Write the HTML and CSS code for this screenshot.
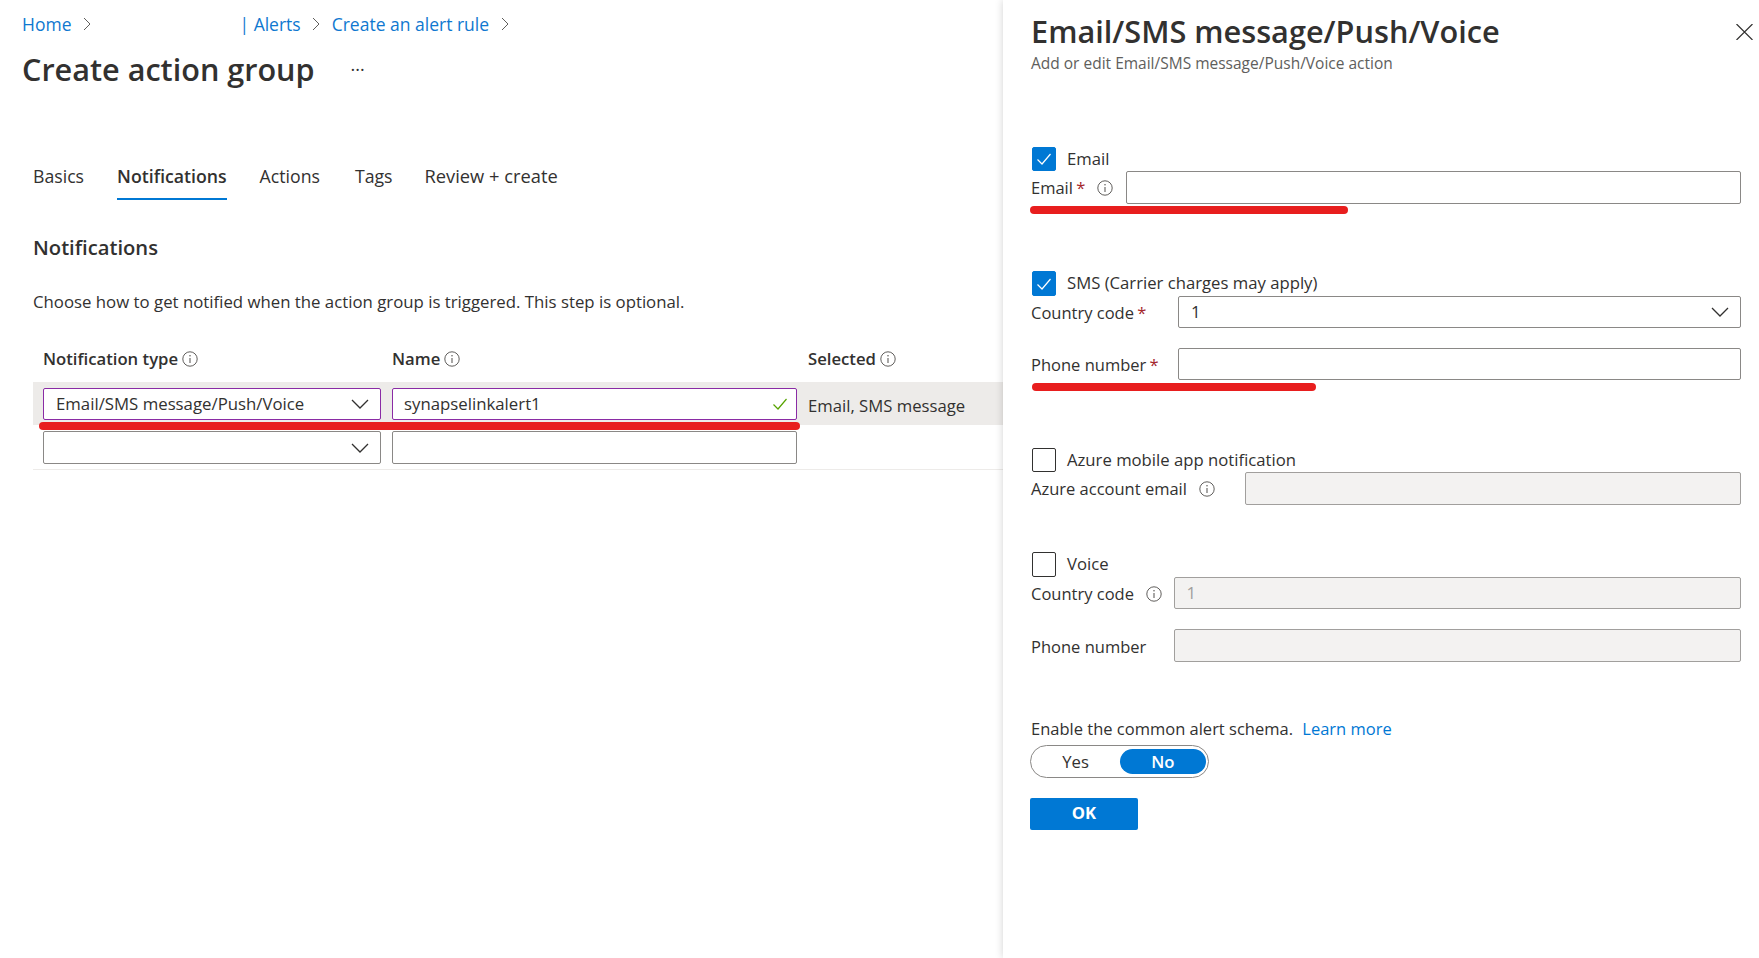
FILE: index.html
```html
<!DOCTYPE html>
<html lang="en">
<head>
<meta charset="utf-8">
<title>Create action group</title>
<link rel="stylesheet" href="styles.css">
</head>
<body>
<svg class="defs" width="0" height="0" aria-hidden="true">
  <symbol id="info" viewBox="0 0 16 16"><circle cx="8" cy="8" r="7.2" fill="none" stroke="currentColor" stroke-width="1"/><circle cx="8" cy="4.8" r=".8" fill="currentColor"/><path d="M8 7v5" stroke="currentColor" stroke-width="1.1" fill="none"/></symbol>
  <symbol id="chev" viewBox="0 0 18 10"><path d="M1 1l8 8 8-8" fill="none" stroke="currentColor" stroke-width="1.3"/></symbol>
  <symbol id="crumb" viewBox="0 0 8 14"><path d="M1 1l6 6-6 6" fill="none" stroke="currentColor" stroke-width="1"/></symbol>
  <symbol id="tick" viewBox="0 0 16 16"><path d="M1.500 8.500l4.500 4.500L14.500 3" fill="none" stroke="currentColor" stroke-width="1.200"/></symbol>
</svg>
<div class="page">
  <main class="main">
    <nav class="crumbs">
      <a class="crumb home">Home</a><svg class="crumb-chev"><use href="#crumb"/></svg>
      <a class="crumb alerts">| Alerts</a><svg class="crumb-chev"><use href="#crumb"/></svg>
      <a class="crumb">Create an alert rule</a><svg class="crumb-chev"><use href="#crumb"/></svg>
    </nav>
    <div class="title-row">
      <h1 class="title">Create action group</h1>
      <span class="dots">···</span>
    </div>
    <div class="tabs">
      <span class="tab">Basics</span>
      <span class="tab active">Notifications</span>
      <span class="tab">Actions</span>
      <span class="tab tab-tags">Tags</span>
      <span class="tab tab-review">Review + create</span>
    </div>
    <section class="content">
      <h2 class="section-title">Notifications</h2>
      <p class="intro">Choose how to get notified when the action group is triggered. This step is optional.</p>
      <div class="table">
        <div class="thead">
          <div class="col-type th">Notification type <svg class="info"><use href="#info"/></svg></div>
          <div class="col-name th">Name <svg class="info"><use href="#info"/></svg></div>
          <div class="col-sel th">Selected <svg class="info"><use href="#info"/></svg></div>
        </div>
        <div class="row row-active">
          <div class="col-type field field-active"><span>Email/SMS message/Push/Voice</span><svg class="chev"><use href="#chev"/></svg></div>
          <div class="col-name field field-active"><span>synapselinkalert1</span><svg class="tick"><use href="#tick"/></svg></div>
          <div class="col-sel cell">Email, SMS message</div>
          <i class="mark mark-row"></i>
        </div>
        <div class="row row-empty">
          <div class="col-type field"><span></span><svg class="chev"><use href="#chev"/></svg></div>
          <div class="col-name field"></div>
        </div>
      </div>
    </section>
  </main>
  <aside class="panel">
    <header class="panel-head">
      <div>
        <h2 class="panel-title">Email/SMS message/Push/Voice</h2>
        <p class="panel-sub">Add or edit Email/SMS message/Push/Voice action</p>
      </div>
      <svg class="close" viewBox="0 0 17 16"><path d="M.5 0l16 16M16.500 0L.5 16" fill="none" stroke="#323130" stroke-width="1.200"/></svg>
    </header>

    <section class="group group-email">
      <div class="check-row"><span class="box on"><svg class="box-tick"><use href="#tick"/></svg></span>Email</div>
      <div class="form-row r33">
        <label class="lbl w-email">Email <b class="req">*</b><svg class="info form-info"><use href="#info"/></svg></label>
        <div class="field"></div>
      </div>
      <i class="mark mark-email"></i>
    </section>

    <section class="group group-sms">
      <div class="check-row h25"><span class="box on"><svg class="box-tick"><use href="#tick"/></svg></span>SMS (Carrier charges may apply)</div>
      <div class="form-row r32">
        <label class="lbl w-sms">Country code <b class="req">*</b></label>
        <div class="field"><span>1</span><svg class="chev"><use href="#chev"/></svg></div>
      </div>
      <div class="form-row r32 gap20">
        <label class="lbl w-sms">Phone number <b class="req">*</b></label>
        <div class="field"></div>
      </div>
      <i class="mark mark-phone"></i>
    </section>

    <section class="group group-azure">
      <div class="check-row"><span class="box"></span>Azure mobile app notification</div>
      <div class="form-row r33">
        <label class="lbl w-azure">Azure account email<svg class="info form-info"><use href="#info"/></svg></label>
        <div class="field disabled"></div>
      </div>
    </section>

    <section class="group group-voice">
      <div class="check-row h25"><span class="box"></span>Voice</div>
      <div class="form-row r32">
        <label class="lbl w-voice">Country code<svg class="info form-info"><use href="#info"/></svg></label>
        <div class="field disabled"><span>1</span></div>
      </div>
      <div class="form-row r33 gap20">
        <label class="lbl w-voice">Phone number</label>
        <div class="field disabled"></div>
      </div>
    </section>

    <section class="schema">
      <div class="schema-text">Enable the common alert schema. <a class="learn">Learn more</a></div>
      <div class="toggle"><span class="opt">Yes</span><span class="opt opt-on">No</span></div>
      <button class="ok" type="button">OK</button>
    </section>
  </aside>
</div>
</body>
</html>
```

FILE: styles.css
```css
* { box-sizing: border-box; }
html, body { margin: 0; padding: 0; height: 100%; overflow: hidden; background: #fff; }
body { font-family: "Open Sans", "Noto Sans", sans-serif; font-size: 16.700px; line-height: 24px; color: #323130; }
.defs { position: absolute; }
.page { display: flex; height: 958px; width: 1759px; }
.main { width: 1003px; flex: none; padding-top: 12px; }

.crumbs { display: flex; align-items: center; height: 24px; padding-left: 22px; color: #0f78d0; font-size: 17.500px; }
.crumb-chev { width: 8px; height: 14px; margin: 0 11.500px; color: #605e5c; }
.crumb.alerts { margin-left: 137px; }
.title-row { display: flex; align-items: center; height: 40px; margin-top: 13px; padding-left: 22px; }
.title { margin: 0; font-size: 30.600px; font-weight: 600; line-height: 40px; }
.dots { margin-left: 36px; font-size: 18px; color: #323130; }

.tabs { display: flex; gap: 33px; height: 40px; margin: 71px 0 0 33px; font-size: 17.700px; }
.tab { height: 40px; padding-top: 4px; }
.tab.active { font-weight: 600; border-bottom: 2px solid #0078d4; }
.tab-tags { margin-left: 2px; }
.tab-review { margin-left: -1px; font-size: 18.300px; }

.content { padding-left: 33px; }
.section-title { margin: 35px 0 0; font-size: 20.200px; font-weight: 600; line-height: 24px; }
.intro { margin: 31px 0 0; line-height: 24px; font-size: 16.800px; }

.table { margin-top: 33px; }
.thead { display: flex; align-items: center; height: 24px; }
.th { font-weight: 600; display: flex; align-items: center; gap: 4px; }
.col-type { flex: 0 0 338px; margin-left: 10px; }
.col-name { flex: 0 0 404.500px; margin-left: 11px; }
.col-sel { margin-left: 11.500px; }

.row { position: relative; display: flex; align-items: center; }
.row-active { height: 43px; margin-top: 11px; background: #edebe9; }
.row-empty { height: 45px; padding: 6px 0 5px; border-bottom: 1px solid #edebe9; }
.row-active .field { height: 32px; }
.row-empty .field { height: 33px; }
.row-active .cell { padding-top: 4px; }

.field { flex: 1; display: flex; align-items: center; justify-content: space-between; height: 100%; border: 1px solid #8a8886; border-radius: 2px; padding: 0 11px 0 12px; background: #fff; min-width: 0; font-size: 16.800px; }
.col-type.field { flex: 0 0 338px; }
.col-name.field { flex: 0 0 404.500px; padding-left: 11px; }
.field-active { border-color: #8a2ba5; }
.disabled { background: #f3f2f1; border-color: #a19f9d; color: #a19f9d; }
.chev { width: 18px; height: 10px; flex: none; color: #323130; }
.tick { width: 16px; height: 16px; flex: none; color: #57a300; margin-right: -3px; }
.info { width: 16px; height: 16px; flex: none; color: #605e5c; }

.mark { position: absolute; display: block; height: 8px; background: #e81e1e; border-radius: 4px; }
.mark-row { left: 6px; top: 40px; width: 761px; }
.mark-email { left: -1px; top: 59px; width: 318px; }
.mark-phone { left: 1px; top: 112px; width: 284px; }

.panel { position: relative; width: 756px; flex: none; padding: 11px 18px 0 28px; box-shadow: 0 0 8px rgba(0, 0, 0, .18); background: #fff; }
.panel-head { display: flex; justify-content: space-between; margin-right: -12px; }
.panel-title { margin: 0 0 1px; font-size: 30.700px; font-weight: 600; line-height: 40px; }
.panel-sub { margin: 0; font-size: 15.500px; line-height: 22px; color: #605e5c; }
.close { width: 17px; height: 16px; margin-top: 13px; flex: none; }

.group { position: relative; }
.group-email { margin-top: 73px; }
.group-sms { margin-top: 67px; }
.group-azure { margin-top: 68px; }
.group-voice { margin-top: 47px; }

.check-row { display: flex; align-items: flex-start; gap: 11px; height: 24px; padding-left: 1px; }
.h25 { height: 25px; }
.box { display: flex; align-items: center; justify-content: center; width: 24px; height: 100%; border: 1px solid #323130; border-radius: 2px; }
.box.on { background: #0078d4; border-color: #0078d4; }
.box-tick { width: 16px; height: 16px; color: #fff; }

.form-row { display: flex; align-items: center; }
.r32 { height: 32px; }
.r33 { height: 33px; }
.gap20 { margin-top: 20px; }
.lbl { flex: none; display: flex; align-items: center; white-space: pre; padding-top: 1px; font-size: 16.500px; }
.gap20 .lbl { padding-top: 2px; }
.req { color: #a4262c; font-weight: 400; margin-left: -1px; }
.form-info { margin-left: 12px; }
.w-email { width: 95px; }
.w-sms { width: 147px; }
.w-azure { width: 214px; }
.w-voice { width: 142.500px; }

.schema { margin-top: 55px; }
.schema-text { height: 24px; font-size: 16.500px; }
.learn { color: #0078d4; margin-left: 5px; }
.toggle { display: flex; align-items: center; justify-content: space-between; width: 178.500px; height: 33px; margin: 4px 0 0 -1px; padding: 0 2px 0 0; border: 1px solid #8a8886; border-radius: 17px; }
.opt { width: 91px; text-align: center; }
.opt-on { width: 87px; height: 25px; line-height: 25px; background: #0078d4; color: #fff; border-radius: 13px; font-weight: 600; }
.ok { display: block; width: 108px; height: 32px; margin: 20px 0 0 -1px; padding: 0 0 2px; border: 0; border-radius: 2px; background: #0078d4; color: #fff; font: 700 16.700px/28px "Open Sans", "Noto Sans", sans-serif; }
```
